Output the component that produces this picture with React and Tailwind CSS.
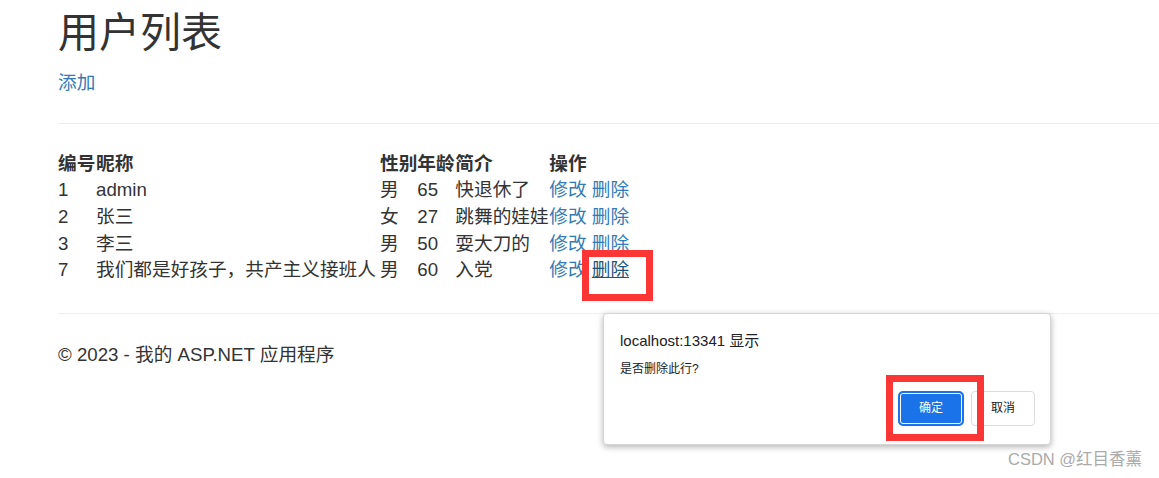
import React from 'react'

const users = [
    { id: 1, name: 'admin', sex: '男', age: 65, intro: '快退休了' },
    { id: 2, name: '张三', sex: '女', age: 27, intro: '跳舞的娃娃' },
    { id: 3, name: '李三', sex: '男', age: 50, intro: '耍大刀的' },
    { id: 7, name: '我们都是好孩子，共产主义接班人', sex: '男', age: 60, intro: '入党' },
];

export default function App() {
    return (
        <div
            className="relative w-[1159px] h-[478px] overflow-hidden bg-white text-[#333] text-[18.67px] leading-[26.67px]"
            style={{ fontFamily: '"Liberation Sans", "Noto Sans CJK SC", sans-serif' }}
        >
            <div className="pl-[58px]">
                <h2 className="text-[41px] leading-[44px] font-normal mt-[11px] mb-[15px]">用户列表</h2>
                <p>
                    <a className="text-[#337ab7]">添加</a>
                </p>
                <hr className="mt-[26px] border-t border-[#eee]" />

                <table className="mt-[27px] border-collapse whitespace-nowrap">
                    <thead>
                        <tr className="text-left">
                            <th className="w-[38px] min-w-[38px] p-0 font-bold">编号</th>
                            <th className="w-[284px] min-w-[284px] p-0 font-bold">昵称</th>
                            <th className="w-[37px] min-w-[37px] p-0 font-bold">性别</th>
                            <th className="w-[38px] min-w-[38px] p-0 font-bold">年龄</th>
                            <th className="w-[94px] min-w-[94px] p-0 font-bold">简介</th>
                            <th className="p-0 font-bold">操作</th>
                        </tr>
                    </thead>
                    <tbody>
                        {users.map((u, i) => (
                            <tr key={u.id}>
                                <td className="p-0">{u.id}</td>
                                <td className="p-0">{u.name}</td>
                                <td className="p-0">{u.sex}</td>
                                <td className="p-0">{u.age}</td>
                                <td className="p-0">{u.intro}</td>
                                <td className="p-0">
                                    <a className="text-[#337ab7]">修改</a>{' '}
                                    <a className={i === 3 ? 'text-[#23527c] underline' : 'text-[#337ab7]'}>删除</a>
                                </td>
                            </tr>
                        ))}
                    </tbody>
                </table>

                <hr className="mt-[29px] border-t border-[#eee]" />
                <footer className="mt-[28px]">
                    <p>© 2023 - 我的 ASP.NET 应用程序</p>
                </footer>
            </div>

            {/* 删除 highlight */}
            <div className="absolute left-[582px] top-[250px] w-[71px] h-[51px] border-[7px] border-[#fc3535]" />

            {/* confirm dialog */}
            <div className="absolute left-[603px] top-[313px] w-[448px] h-[132px] bg-white rounded-[4px] border border-[#d6d6d6] shadow-[0_2px_6px_rgba(0,0,0,0.3)]">
                <div className="pl-[16px] pt-[16px] text-[15px] leading-[22px] text-[#202124]">localhost:13341 显示</div>
                <div className="pl-[16px] mt-[8px] text-[12px] leading-[18px] text-[#202124]">是否删除此行?</div>
                <div className="flex justify-end gap-[7px] pr-[15px] mt-[13px]">
                    <button className="w-[66px] h-[35px] rounded-[5px] border-2 border-[#1a73e8] bg-[#1a73e8] ring-1 ring-inset ring-white text-white text-[12px]">
                        确定
                    </button>
                    <button className="w-[64px] h-[35px] rounded-[4px] border border-[#dadce0] bg-white text-[#1a1a1a] text-[12px]">
                        取消
                    </button>
                </div>
            </div>

            {/* 确定 highlight */}
            <div className="absolute left-[886px] top-[375px] w-[98px] h-[66px] border-[7px] border-[#fc3535]" />

            <div className="absolute left-[1008px] top-[448px] text-[16.5px] leading-[22px] text-[#aaa]">CSDN @红目香薰</div>
        </div>
    )
}
